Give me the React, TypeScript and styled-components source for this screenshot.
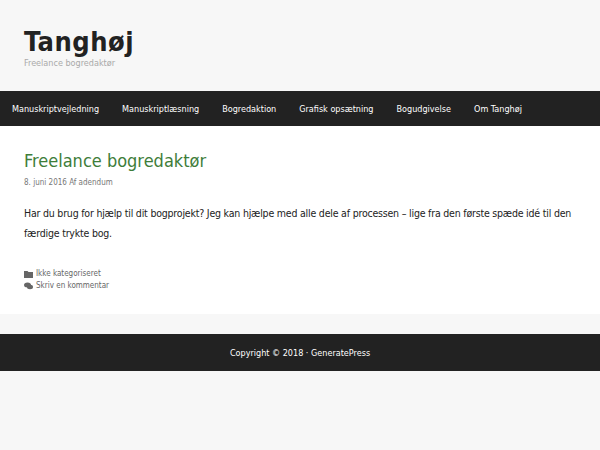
import styled, {createGlobalStyle} from "styled-components";

const Global = createGlobalStyle`
  body {
    margin: 0;
    background: #f7f7f7;
    font-family: "DejaVu Sans Condensed", "DejaVu Sans", sans-serif;
    font-stretch: condensed;
    color: #3a3a3a;
  }
`

const links = ["Manuskriptvejledning", "Manuskriptlæsning", "Bogredaktion", "Grafisk opsætning", "Bogudgivelse", "Om Tanghøj"];

const App = () => (
    <>
        <Global/>
        <Header>
            <SiteTitle>Tanghøj</SiteTitle>
            <Tagline>Freelance bogredaktør</Tagline>
        </Header>
        <Nav>
            {links.map(l => <NavItem key={l}>{l}</NavItem>)}
        </Nav>
        <Article>
            <PostTitle>Freelance bogredaktør</PostTitle>
            <Meta>8. juni 2016 Af adendum</Meta>
            <Body>
                Har du brug for hjælp til dit bogprojekt? Jeg kan hjælpe med alle dele af processen – lige fra den første spæde idé til den færdige trykte bog.
            </Body>
            <FooterMeta>
                <MetaLine>
                    <svg width="9" height="8" viewBox="0 0 9 8"><path d="M0 1h3.5l1 1H9v6H0z" fill="#666"/></svg>
                    Ikke kategoriseret
                </MetaLine>
                <MetaLine>
                    <svg width="9" height="8" viewBox="0 0 9 8"><ellipse cx="3.5" cy="3" rx="3.5" ry="2.5" fill="#666"/><ellipse cx="6" cy="5" rx="3" ry="2.2" fill="#666"/></svg>
                    Skriv en kommentar
                </MetaLine>
            </FooterMeta>
        </Article>
        <Footer>Copyright © 2018 · GeneratePress</Footer>
    </>
)

const Header = styled.header`
  padding: 28px 24px 0;
  height: 63px;
`

const SiteTitle = styled.div`
  font-size: 27px;
  font-weight: bold;
  color: #222;
  line-height: 28px;
  letter-spacing: 0.5px;
`

const Tagline = styled.div`
  font-size: 9px;
  color: #aaa;
  margin-top: 2px;
`

const Nav = styled.nav`
  background: #222;
  height: 35px;
  display: flex;
  align-items: center;
  padding-left: 12px;
  gap: 23px;
`

const NavItem = styled.span`
  color: #fff;
  font-size: 9px;
`

const Article = styled.main`
  background: #fff;
  padding: 24px 24px 20px;
  height: 144px;
`

const PostTitle = styled.h1`
  margin: 0;
  font-weight: normal;
  font-size: 18px;
  color: #3e7d3a;
  line-height: 22px;
`

const Meta = styled.div`
  font-size: 8px;
  color: #777;
  margin-top: 6px;
`

const Body = styled.p`
  font-size: 10.5px;
  line-height: 20px;
  color: #222;
  margin: 16px 0 0;
  letter-spacing: -0.2px;
`

const FooterMeta = styled.div`
  margin-top: 26px;
  display: flex;
  flex-direction: column;
  gap: 3px;
`

const MetaLine = styled.div`
  font-size: 8px;
  color: #666;
  display: flex;
  align-items: center;
  gap: 3px;
`

const Footer = styled.footer`
  margin-top: 20px;
  background: #222;
  height: 37px;
  display: flex;
  align-items: center;
  justify-content: center;
  color: #fff;
  font-size: 9px;
`

export default App;
